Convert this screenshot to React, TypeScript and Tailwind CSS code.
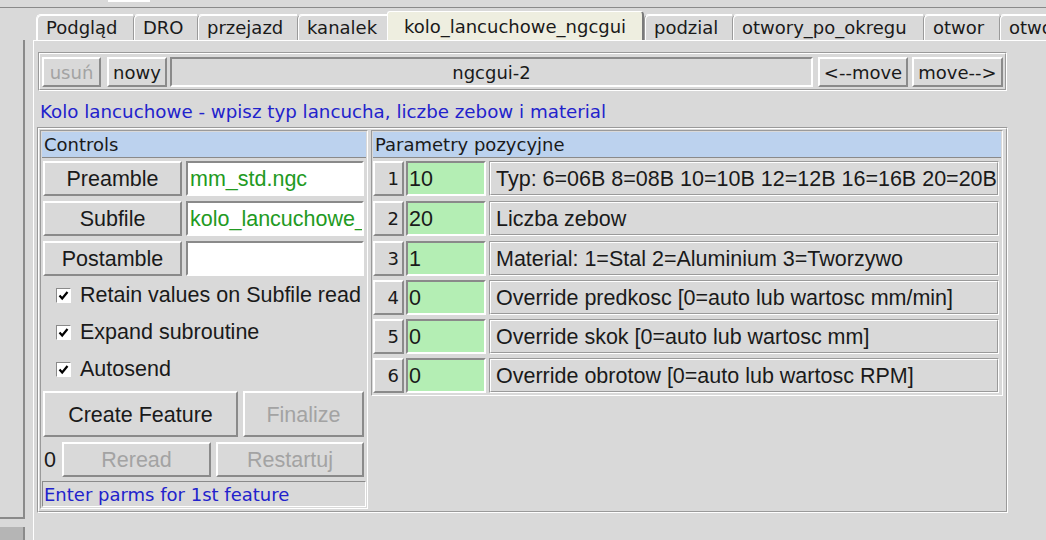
import React from "react";

const DJ = "font-['DejaVu_Sans',sans-serif] text-[18px]";
const AR = "font-['Liberation_Sans',Arial,sans-serif] text-[21.5px] pt-[2px]";
const RAISED = "border-2 border-t-white border-l-white border-r-[#8a8a8a] border-b-[#8a8a8a]";
const SUNKEN = "border-2 border-t-[#8a8a8a] border-l-[#8a8a8a] border-r-white border-b-white";

function Groove({ className, children }: { className?: string; children?: React.ReactNode }) {
  return (
    <div className={"border border-t-[#9a9a9a] border-l-[#9a9a9a] border-r-white border-b-white " + (className ?? "")}>
      <div className="border border-t-white border-l-white border-r-[#9a9a9a] border-b-[#9a9a9a] h-full">{children}</div>
    </div>
  );
}

function Btn({ w, h, label, disabled, font }: { w: string; h: string; label: string; disabled?: boolean; font: string }) {
  return (
    <div className={`${w} ${h} flex-none flex items-center justify-center ${RAISED} ${font} ${disabled ? "text-[#a3a3a3]" : "text-[#1a1a1a]"} whitespace-nowrap`}>
      {label}
    </div>
  );
}

function Check({ label }: { label: string }) {
  return (
    <div className="h-[37px] flex items-center pl-[14px] pt-[2px]">
      <div className="w-[15px] h-[15px] bg-white border border-t-[#8a8a8a] border-l-[#8a8a8a] border-r-white border-b-white flex items-center justify-center">
        <svg width="11" height="11" viewBox="0 0 11 11">
          <path d="M1.5 5.5 L4.2 8.5 L9.5 2" fill="none" stroke="#000" strokeWidth="2.2" />
        </svg>
      </div>
      <span className="font-['Liberation_Sans',Arial,sans-serif] text-[21.5px] ml-[9px] text-[#1a1a1a] whitespace-nowrap">{label}</span>
    </div>
  );
}

const tabs: { label: string; w: string; sel?: boolean }[] = [
  { label: "Podgląd", w: "w-[97px]" },
  { label: "DRO", w: "w-[64px]" },
  { label: "przejazd", w: "w-[100px]" },
  { label: "kanalek", w: "w-[90px]" },
  { label: "kolo_lancuchowe_ngcgui", w: "w-[257px]", sel: true },
  { label: "podzial", w: "w-[88px]" },
  { label: "otwory_po_okregu", w: "w-[191px]" },
  { label: "otwor", w: "w-[76px]" },
  { label: "otwor_x", w: "w-[80px]" },
];

const params = [
  { n: "1", v: "10", d: "Typ: 6=06B 8=08B 10=10B 12=12B 16=16B 20=20B", mt: "mt-[3px]" },
  { n: "2", v: "20", d: "Liczba zebow", mt: "mt-[5px]" },
  { n: "3", v: "1", d: "Material: 1=Stal 2=Aluminium 3=Tworzywo", mt: "mt-[5px]" },
  { n: "4", v: "0", d: "Override predkosc [0=auto lub wartosc mm/min]", mt: "mt-[4px]" },
  { n: "5", v: "0", d: "Override skok [0=auto lub wartosc mm]", mt: "mt-[4px]" },
  { n: "6", v: "0", d: "Override obrotow [0=auto lub wartosc RPM]", mt: "mt-[4px]" },
];

export default function App() {
  return (
    <div className={`w-[1046px] h-[540px] bg-[#d9d9d9] overflow-hidden flex flex-col ${DJ} text-[#1a1a1a]`}>
      {/* top strip */}
      <div className="h-[8px] flex-none border-b border-[#8a8a8a]">
        <div className="ml-[108px] w-[42px] h-[2px] bg-white" />
      </div>
      <div className="flex flex-1 min-h-0">
        {/* left panel */}
        <div className="w-[25px] flex-none flex flex-col">
          <div className="h-[32px] flex-none" />
          <div className="h-[479px] flex-none border-r-2 border-b-2 border-[#8a8a8a]" />
          <div className="mt-[8px] flex-1 bg-[#b5b5b5] border-r-2 border-[#8a8a8a]" />
        </div>
        <div className="w-[8px] flex-none" />
        {/* notebook */}
        <div className="flex-1 flex flex-col min-w-0">
          <div className="h-[32px] flex-none flex items-end pl-[3px] overflow-hidden">
            {tabs.map((t, i) =>
              t.sel ? (
                <div
                  key={i}
                  className={`${t.w} h-[29px] flex-none flex items-center justify-center bg-[#eeeee0] border-t border-l border-white border-r-2 border-r-[#7a7a7a] rounded-tr-[4px] rounded-tl-[3px] whitespace-nowrap`}
                >
                  {t.label}
                </div>
              ) : (
                <div
                  key={i}
                  className={`${t.w} h-[26px] flex-none flex items-center pl-[9px] border-t border-t-white border-l ${i === 0 ? "border-l-white" : "border-l-[#9a9a9a]"} rounded-tl-[5px] shadow-[inset_1px_1px_0_#ffffff] whitespace-nowrap overflow-hidden`}
                >
                  {t.label}
                </div>
              )
            )}
          </div>
          <div className="flex-1 border-t border-l border-white flex flex-col">
            {/* toolbar */}
            <Groove className="ml-[4px] mt-[11px] w-[969px] h-[39px]">
              <div className="flex items-start pt-[3px] pl-[2px]">
                <Btn w="w-[59px]" h="h-[30px]" label="usuń" disabled font={DJ} />
                <div className="w-[6px]" />
                <Btn w="w-[60px]" h="h-[30px]" label="nowy" font={DJ} />
                <div className="w-[3px]" />
                <div className={`w-[643px] h-[30px] flex-none flex items-center justify-center ${SUNKEN}`}>ngcgui-2</div>
                <div className="w-[5px]" />
                <Btn w="w-[90px]" h="h-[30px]" label="<--move" font={DJ} />
                <div className="w-[4px]" />
                <Btn w="w-[91px]" h="h-[30px]" label="move-->" font={DJ} />
              </div>
            </Groove>
            {/* title */}
            <div className="ml-[6px] mt-[10px] h-[21px] leading-[21px] text-[18.25px] text-[#2222cc] whitespace-nowrap">
              Kolo lancuchowe - wpisz typ lancucha, liczbe zebow i material
            </div>
            {/* main frame */}
            <Groove className="ml-[3px] mt-[5px] w-[971px] h-[386px]">
              <div className="flex items-start pl-[1px] pt-[1px]">
                {/* controls */}
                <div className="w-[328px] h-[379px] flex-none border border-t-[#9a9a9a] border-l-[#9a9a9a] border-r-white border-b-white p-[1px] flex flex-col">
                  <div className="h-[26px] flex-none bg-[#bcd2ee] border-b border-[#8a8a8a] flex items-center pl-[2px]">Controls</div>
                  <div className="mt-[3px] h-[35px] flex pl-[1px]">
                    <Btn w="w-[139px]" h="h-[35px]" label="Preamble" font={AR} />
                    <div className={`ml-[4px] w-[178px] h-[35px] bg-white ${SUNKEN} ${AR} text-[#229a22] pl-[2px] flex items-center overflow-hidden whitespace-nowrap`}>mm_std.ngc</div>
                  </div>
                  <div className="mt-[5px] h-[35px] flex pl-[1px]">
                    <Btn w="w-[139px]" h="h-[35px]" label="Subfile" font={AR} />
                    <div className={`ml-[4px] w-[178px] h-[35px] bg-white ${SUNKEN} ${AR} text-[#229a22] pl-[2px] flex items-center overflow-hidden whitespace-nowrap`}>kolo_lancuchowe_ngcgui.ngc</div>
                  </div>
                  <div className="mt-[5px] h-[35px] flex pl-[1px]">
                    <Btn w="w-[139px]" h="h-[35px]" label="Postamble" font={AR} />
                    <div className={`ml-[4px] w-[178px] h-[35px] bg-white ${SUNKEN}`} />
                  </div>
                  <Check label="Retain values on Subfile read" />
                  <Check label="Expand subroutine" />
                  <Check label="Autosend" />
                  <div className="mt-[4px] flex pl-[1px]">
                    <Btn w="w-[195px]" h="h-[46px]" label="Create Feature" font={AR} />
                    <div className="w-[5px]" />
                    <Btn w="w-[121px]" h="h-[46px]" label="Finalize" disabled font={AR} />
                  </div>
                  <div className="mt-[5px] flex pl-[1px] items-center">
                    <div className={`w-[19px] h-[35px] flex items-center pl-[1px] ${AR}`}>0</div>
                    <Btn w="w-[149px]" h="h-[35px]" label="Reread" disabled font={AR} />
                    <div className="w-[5px]" />
                    <Btn w="w-[148px]" h="h-[35px]" label="Restartuj" disabled font={AR} />
                  </div>
                  <div className="mt-[4px] h-[26px] border border-t-[#8a8a8a] border-l-[#8a8a8a] border-r-white border-b-white flex items-center pl-[1px] text-[#2222cc] whitespace-nowrap">
                    Enter parms for 1st feature
                  </div>
                </div>
                {/* params */}
                <div className="ml-[3px] w-[632px] flex-none border border-t-[#9a9a9a] border-l-[#9a9a9a] border-r-white border-b-white p-[1px] pb-[2px] flex flex-col">
                  <div className="h-[26px] flex-none bg-[#bcd2ee] border-b border-[#8a8a8a] flex items-center pl-[2px]">Parametry pozycyjne</div>
                  {params.map((p) => (
                    <div key={p.n} className={`${p.mt} h-[35px] flex`}>
                      <div className={`w-[31px] h-[35px] flex-none ${RAISED} flex items-center justify-end pr-[3px]`}>{p.n}</div>
                      <div className={`ml-[2px] w-[80px] h-[35px] flex-none bg-[#b4eeb4] ${SUNKEN} ${AR} pl-[1px] flex items-center`}>{p.v}</div>
                      <div className="ml-[3px] w-[510px] h-[35px] flex-none border border-t-[#9a9a9a] border-l-[#9a9a9a] border-r-white border-b-white">
                        <div className={`h-full border border-t-white border-l-white border-r-[#9a9a9a] border-b-[#9a9a9a] ${AR} pl-[5px] flex items-center whitespace-nowrap overflow-hidden`}>{p.d}</div>
                      </div>
                    </div>
                  ))}
                </div>
              </div>
            </Groove>
          </div>
        </div>
      </div>
    </div>
  );
}
